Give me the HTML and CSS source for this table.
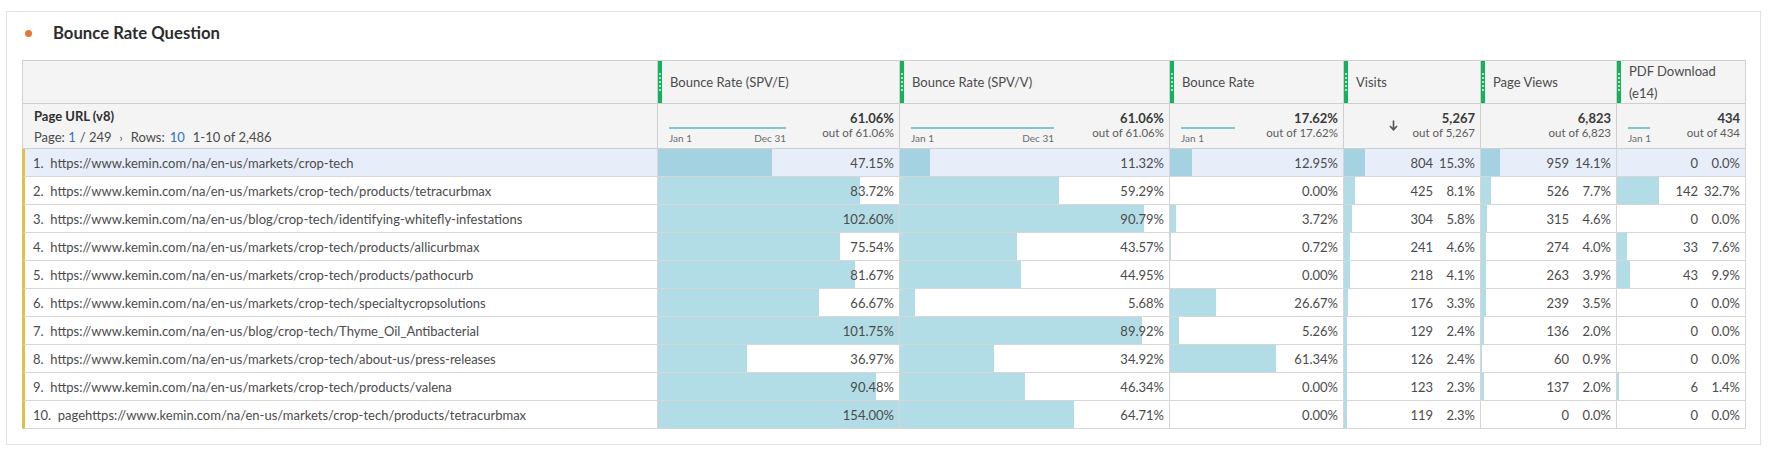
FILE: index.html
```html
<!DOCTYPE html>
<html>
<head>
<meta charset="utf-8">
<title>Bounce Rate Question</title>
<link rel="stylesheet" href="styles.css">
</head>
<body>
<div class="panel">
  <div class="title"><span class="dot"></span><span class="title-text">Bounce Rate Question</span></div>
  <div class="table">
    <!-- header row -->
    <div class="hcell hfirst"></div>
    <div class="hcell"><span class="grip"><i></i><i></i><i></i><i></i><i></i></span><span class="htext">Bounce Rate (SPV/E)</span></div>
    <div class="hcell"><span class="grip"><i></i><i></i><i></i><i></i><i></i></span><span class="htext">Bounce Rate (SPV/V)</span></div>
    <div class="hcell"><span class="grip"><i></i><i></i><i></i><i></i><i></i></span><span class="htext">Bounce Rate</span></div>
    <div class="hcell"><span class="grip"><i></i><i></i><i></i><i></i><i></i></span><span class="htext">Visits</span></div>
    <div class="hcell"><span class="grip"><i></i><i></i><i></i><i></i><i></i></span><span class="htext">Page Views</span></div>
    <div class="hcell"><span class="grip"><i></i><i></i><i></i><i></i><i></i></span><span class="htext wrap">PDF Download (e14)</span></div>

    <!-- summary row -->
    <div class="scell sfirst">
      <div class="dim">Page URL (v8)</div>
      <div class="pager">Page: <span class="link">1</span><span class="sep">/ 249</span><span class="chev">›</span><span class="rows">Rows:</span><span class="link">10</span><span class="range">1-10 of 2,486</span></div>
    </div>
    <div class="scell">
      <div class="spark w117"><div class="sline"></div><div class="slabels"><span>Jan 1</span><span>Dec 31</span></div></div>
      <div class="tot"><b>61.06%</b><span>out of 61.06%</span></div>
    </div>
    <div class="scell">
      <div class="spark w143"><div class="sline"></div><div class="slabels"><span>Jan 1</span><span>Dec 31</span></div></div>
      <div class="tot"><b>61.06%</b><span>out of 61.06%</span></div>
    </div>
    <div class="scell">
      <div class="spark w54"><div class="sline"></div><div class="slabels"><span>Jan 1</span></div></div>
      <div class="tot"><b>17.62%</b><span>out of 17.62%</span></div>
    </div>
    <div class="scell send">
      <svg class="sort" width="9" height="11" viewBox="0 0 9 11"><path d="M4.5 0.5 V9.5 M1 6 L4.5 9.8 L8 6" fill="none" stroke="#555" stroke-width="1.6"/></svg>
      <div class="tot"><b>5,267</b><span>out of 5,267</span></div>
    </div>
    <div class="scell send">
      <div class="tot"><b>6,823</b><span>out of 6,823</span></div>
    </div>
    <div class="scell">
      <div class="spark w20"><div class="sline"></div><div class="slabels"><span>Jan 1</span></div></div>
      <div class="tot"><b>434</b><span>out of 434</span></div>
    </div>

    <!-- row 1 -->
    <div class="dcell dfirst sel"><span class="lbl">1.&nbsp; https://www.kemin.com/na/en-us/markets/crop-tech</span></div>
    <div class="dcell sel"><span class="bar" style="width:47.15%"></span><span class="val">47.15%</span></div>
    <div class="dcell sel"><span class="bar" style="width:11.32%"></span><span class="val">11.32%</span></div>
    <div class="dcell sel"><span class="bar" style="width:12.95%"></span><span class="val">12.95%</span></div>
    <div class="dcell sel"><span class="bar" style="width:15.3%"></span><span class="val"><span>804</span><span class="pc">15.3%</span></span></div>
    <div class="dcell sel"><span class="bar" style="width:14.1%"></span><span class="val"><span>959</span><span class="pc">14.1%</span></span></div>
    <div class="dcell sel"><span class="bar" style="width:0%"></span><span class="val"><span>0</span><span class="pc">0.0%</span></span></div>

    <!-- row 2 -->
    <div class="dcell dfirst"><span class="lbl">2.&nbsp; https://www.kemin.com/na/en-us/markets/crop-tech/products/tetracurbmax</span></div>
    <div class="dcell"><span class="bar" style="width:83.72%"></span><span class="val">83.72%</span></div>
    <div class="dcell"><span class="bar" style="width:59.29%"></span><span class="val">59.29%</span></div>
    <div class="dcell"><span class="bar" style="width:0%"></span><span class="val">0.00%</span></div>
    <div class="dcell"><span class="bar" style="width:8.1%"></span><span class="val"><span>425</span><span class="pc">8.1%</span></span></div>
    <div class="dcell"><span class="bar" style="width:7.7%"></span><span class="val"><span>526</span><span class="pc">7.7%</span></span></div>
    <div class="dcell"><span class="bar" style="width:32.7%"></span><span class="val"><span>142</span><span class="pc">32.7%</span></span></div>

    <!-- row 3 -->
    <div class="dcell dfirst"><span class="lbl">3.&nbsp; https://www.kemin.com/na/en-us/blog/crop-tech/identifying-whitefly-infestations</span></div>
    <div class="dcell"><span class="bar" style="width:100%"></span><span class="val">102.60%</span></div>
    <div class="dcell"><span class="bar" style="width:90.79%"></span><span class="val">90.79%</span></div>
    <div class="dcell"><span class="bar" style="width:3.72%"></span><span class="val">3.72%</span></div>
    <div class="dcell"><span class="bar" style="width:5.8%"></span><span class="val"><span>304</span><span class="pc">5.8%</span></span></div>
    <div class="dcell"><span class="bar" style="width:4.6%"></span><span class="val"><span>315</span><span class="pc">4.6%</span></span></div>
    <div class="dcell"><span class="bar" style="width:0%"></span><span class="val"><span>0</span><span class="pc">0.0%</span></span></div>

    <!-- row 4 -->
    <div class="dcell dfirst"><span class="lbl">4.&nbsp; https://www.kemin.com/na/en-us/markets/crop-tech/products/allicurbmax</span></div>
    <div class="dcell"><span class="bar" style="width:75.54%"></span><span class="val">75.54%</span></div>
    <div class="dcell"><span class="bar" style="width:43.57%"></span><span class="val">43.57%</span></div>
    <div class="dcell"><span class="bar" style="width:0.72%"></span><span class="val">0.72%</span></div>
    <div class="dcell"><span class="bar" style="width:4.6%"></span><span class="val"><span>241</span><span class="pc">4.6%</span></span></div>
    <div class="dcell"><span class="bar" style="width:4.0%"></span><span class="val"><span>274</span><span class="pc">4.0%</span></span></div>
    <div class="dcell"><span class="bar" style="width:7.6%"></span><span class="val"><span>33</span><span class="pc">7.6%</span></span></div>

    <!-- row 5 -->
    <div class="dcell dfirst"><span class="lbl">5.&nbsp; https://www.kemin.com/na/en-us/markets/crop-tech/products/pathocurb</span></div>
    <div class="dcell"><span class="bar" style="width:81.67%"></span><span class="val">81.67%</span></div>
    <div class="dcell"><span class="bar" style="width:44.95%"></span><span class="val">44.95%</span></div>
    <div class="dcell"><span class="bar" style="width:0%"></span><span class="val">0.00%</span></div>
    <div class="dcell"><span class="bar" style="width:4.1%"></span><span class="val"><span>218</span><span class="pc">4.1%</span></span></div>
    <div class="dcell"><span class="bar" style="width:3.9%"></span><span class="val"><span>263</span><span class="pc">3.9%</span></span></div>
    <div class="dcell"><span class="bar" style="width:9.9%"></span><span class="val"><span>43</span><span class="pc">9.9%</span></span></div>

    <!-- row 6 -->
    <div class="dcell dfirst"><span class="lbl">6.&nbsp; https://www.kemin.com/na/en-us/markets/crop-tech/specialtycropsolutions</span></div>
    <div class="dcell"><span class="bar" style="width:66.67%"></span><span class="val">66.67%</span></div>
    <div class="dcell"><span class="bar" style="width:5.68%"></span><span class="val">5.68%</span></div>
    <div class="dcell"><span class="bar" style="width:26.67%"></span><span class="val">26.67%</span></div>
    <div class="dcell"><span class="bar" style="width:3.3%"></span><span class="val"><span>176</span><span class="pc">3.3%</span></span></div>
    <div class="dcell"><span class="bar" style="width:3.5%"></span><span class="val"><span>239</span><span class="pc">3.5%</span></span></div>
    <div class="dcell"><span class="bar" style="width:0%"></span><span class="val"><span>0</span><span class="pc">0.0%</span></span></div>

    <!-- row 7 -->
    <div class="dcell dfirst"><span class="lbl">7.&nbsp; https://www.kemin.com/na/en-us/blog/crop-tech/Thyme_Oil_Antibacterial</span></div>
    <div class="dcell"><span class="bar" style="width:100%"></span><span class="val">101.75%</span></div>
    <div class="dcell"><span class="bar" style="width:89.92%"></span><span class="val">89.92%</span></div>
    <div class="dcell"><span class="bar" style="width:5.26%"></span><span class="val">5.26%</span></div>
    <div class="dcell"><span class="bar" style="width:2.4%"></span><span class="val"><span>129</span><span class="pc">2.4%</span></span></div>
    <div class="dcell"><span class="bar" style="width:2.0%"></span><span class="val"><span>136</span><span class="pc">2.0%</span></span></div>
    <div class="dcell"><span class="bar" style="width:0%"></span><span class="val"><span>0</span><span class="pc">0.0%</span></span></div>

    <!-- row 8 -->
    <div class="dcell dfirst"><span class="lbl">8.&nbsp; https://www.kemin.com/na/en-us/markets/crop-tech/about-us/press-releases</span></div>
    <div class="dcell"><span class="bar" style="width:36.97%"></span><span class="val">36.97%</span></div>
    <div class="dcell"><span class="bar" style="width:34.92%"></span><span class="val">34.92%</span></div>
    <div class="dcell"><span class="bar" style="width:61.34%"></span><span class="val">61.34%</span></div>
    <div class="dcell"><span class="bar" style="width:2.4%"></span><span class="val"><span>126</span><span class="pc">2.4%</span></span></div>
    <div class="dcell"><span class="bar" style="width:0.9%"></span><span class="val"><span>60</span><span class="pc">0.9%</span></span></div>
    <div class="dcell"><span class="bar" style="width:0%"></span><span class="val"><span>0</span><span class="pc">0.0%</span></span></div>

    <!-- row 9 -->
    <div class="dcell dfirst"><span class="lbl">9.&nbsp; https://www.kemin.com/na/en-us/markets/crop-tech/products/valena</span></div>
    <div class="dcell"><span class="bar" style="width:90.48%"></span><span class="val">90.48%</span></div>
    <div class="dcell"><span class="bar" style="width:46.34%"></span><span class="val">46.34%</span></div>
    <div class="dcell"><span class="bar" style="width:0%"></span><span class="val">0.00%</span></div>
    <div class="dcell"><span class="bar" style="width:2.3%"></span><span class="val"><span>123</span><span class="pc">2.3%</span></span></div>
    <div class="dcell"><span class="bar" style="width:2.0%"></span><span class="val"><span>137</span><span class="pc">2.0%</span></span></div>
    <div class="dcell"><span class="bar" style="width:1.4%"></span><span class="val"><span>6</span><span class="pc">1.4%</span></span></div>

    <!-- row 10 -->
    <div class="dcell dfirst"><span class="lbl">10.&nbsp; pagehttps://www.kemin.com/na/en-us/markets/crop-tech/products/tetracurbmax</span></div>
    <div class="dcell"><span class="bar" style="width:100%"></span><span class="val">154.00%</span></div>
    <div class="dcell"><span class="bar" style="width:64.71%"></span><span class="val">64.71%</span></div>
    <div class="dcell"><span class="bar" style="width:0%"></span><span class="val">0.00%</span></div>
    <div class="dcell"><span class="bar" style="width:2.3%"></span><span class="val"><span>119</span><span class="pc">2.3%</span></span></div>
    <div class="dcell"><span class="bar" style="width:0%"></span><span class="val"><span>0</span><span class="pc">0.0%</span></span></div>
    <div class="dcell"><span class="bar" style="width:0%"></span><span class="val"><span>0</span><span class="pc">0.0%</span></span></div>
  </div>
</div>
</body>
</html>
```

FILE: styles.css
```css
* { box-sizing: border-box; }

body {
  margin: 0;
  background: #ffffff;
  font-family: "Lato", "Liberation Sans", sans-serif;
  color: #4b4b4b;
}

.panel {
  margin: 11px 0 0 6px;
  width: 1755px;
  height: 434px;
  border: 1px solid #e1e1e1;
  padding: 0 0 0 15px;
}

.title {
  height: 48px;
  display: flex;
  align-items: center;
  padding-bottom: 6px;
}

.dot {
  width: 7px;
  height: 7px;
  border-radius: 50%;
  background: #ea7437;
  margin-left: 3px;
}

.title-text {
  margin-left: 21px;
  font-size: 16.7px;
  font-weight: 700;
  color: #2c2c2c;
}

.table {
  display: grid;
  grid-template-columns: 636px 242px 270px 174px 137px 136px 129px;
  grid-template-rows: 43px 45px repeat(10, 28px);
  border-top: 1px solid #cfcfcf;
  width: 1724px;
}

/* header row */
.hcell {
  background: #f4f4f4;
  border-right: 1px solid #cfcfcf;
  border-bottom: 1px solid #cfcfcf;
  display: flex;
  align-items: center;
  font-size: 13px;
  color: #4b4b4b;
}

.hfirst { border-left: 1px solid #cfcfcf; }

.grip {
  align-self: stretch;
  width: 4px;
  flex: none;
  background: #16b15b;
  display: flex;
  flex-direction: column;
  justify-content: center;
  align-items: center;
  gap: 2px;
}

.grip i {
  display: block;
  width: 2px;
  height: 2px;
  border-radius: 50%;
  background: rgba(255, 255, 255, 0.85);
}

.htext {
  padding-left: 8px;
  line-height: 22px;
}

.htext.wrap { padding-right: 14px; }

/* summary row */
.scell {
  background: #f4f4f4;
  border-right: 1px solid #cfcfcf;
  border-bottom: 1px solid #cfcfcf;
  display: flex;
  align-items: flex-end;
  justify-content: space-between;
  padding: 0 5px 4px 11px;
}

.scell.send {
  justify-content: flex-end;
  gap: 15px;
}

.sfirst {
  border-left: 1px solid #cfcfcf;
  flex-direction: column;
  align-items: flex-start;
  justify-content: center;
  padding: 0 0 0 11px;
  gap: 5px;
}

.dim {
  font-size: 13px;
  font-weight: 700;
  color: #2e2e2e;
}

.pager {
  font-size: 13px;
  color: #4b4b4b;
}

.link { color: #2f72c2; }
.sep { margin-left: 4px; }
.chev { margin-left: 8px; font-size: 11px; }
.rows { margin-left: 8px; margin-right: 5px; }
.range { margin-left: 8px; }

.spark { display: flex; flex-direction: column; }
.w117 { width: 117px; }
.w143 { width: 143px; }
.w54 { width: 54px; }
.w20 { width: 22px; }

.sline {
  height: 2px;
  background: #87c3cf;
}

.slabels {
  margin-top: 3px;
  display: flex;
  justify-content: space-between;
  font-size: 10px;
  line-height: 12px;
  color: #6b6b6b;
  white-space: nowrap;
}

.tot {
  display: flex;
  flex-direction: column;
  align-items: flex-end;
  margin-bottom: 4px;
}

.tot b {
  font-size: 13px;
  line-height: 15px;
  font-weight: 700;
  color: #3a3a3a;
}

.tot span {
  font-size: 11.5px;
  line-height: 14px;
  color: #5c5c5c;
}

.sort {
  align-self: center;
  margin-top: 3px;
}

/* data rows */
.dcell {
  display: grid;
  border-right: 1px solid #d6d6d6;
  border-bottom: 1px solid #d6d6d6;
  font-size: 13px;
  color: #4b4b4b;
  background: #ffffff;
  white-space: nowrap;
}

.dcell.sel { background: #e7eefa; }

.dfirst {
  border-left: 3px solid #dfc04f;
  align-items: center;
}

.lbl {
  padding-left: 8px;
}

.bar {
  grid-area: 1 / 1;
  justify-self: start;
  background: #b2dde6;
}

.sel .bar { background: #a4d2e1; }

.val {
  grid-area: 1 / 1;
  justify-self: end;
  align-self: center;
  padding-right: 5px;
  display: flex;
}

.pc {
  width: 42px;
  text-align: right;
}
```
